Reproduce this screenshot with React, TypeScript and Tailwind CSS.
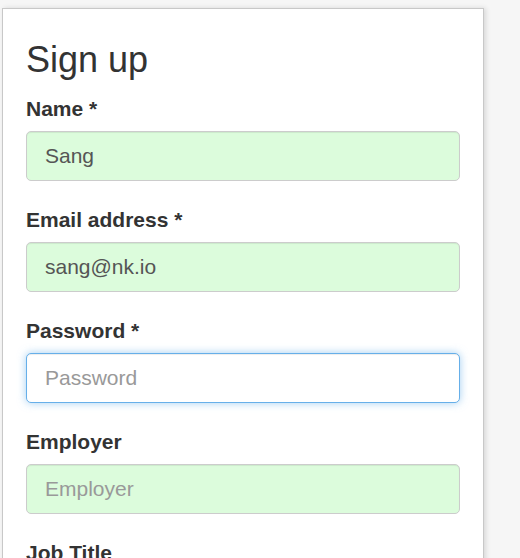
import React from 'react'

interface FieldProps {
  label: string
  required?: boolean
  type?: string
  value?: string
  placeholder: string
  filled?: boolean
  focused?: boolean
}

function Field({ label, required, type = 'text', value, placeholder, filled, focused }: FieldProps) {
  return (
    <div className="mb-[27px]">
      <label className="block h-6 mb-[10px] text-[21px] leading-6 font-bold text-[#333]">
        {label}
        {required ? ' *' : ''}
      </label>
      <input
        type={type}
        defaultValue={value}
        placeholder={placeholder}
        readOnly
        className={
          'block w-full h-[50px] rounded-[5px] border px-[18px] text-[21px] text-[#555] placeholder:text-[#999] outline-none ' +
          (focused
            ? 'bg-white border-[#66afe9] shadow-[inset_0_1px_1px_rgba(0,0,0,0.075),0_0_8px_rgba(102,175,233,0.6)]'
            : filled
              ? 'bg-[#dcfcdc] border-[#cccccc] shadow-[inset_0_1px_1px_rgba(0,0,0,0.075)]'
              : 'bg-white border-[#cccccc]')
        }
      />
    </div>
  )
}

export default function App() {
  return (
    <div
      className="h-[558px] overflow-hidden bg-[#f6f6f6] pt-[8px] pl-[2px]"
      style={{ fontFamily: '"Liberation Sans", Arial, sans-serif' }}
    >
      <div className="w-[482px] bg-white border border-[#c8c8c8] shadow-[2px_0_5px_rgba(0,0,0,0.12)] pt-[31px] px-[23px] pb-8">
        <h2 className="h-10 mb-[17px] text-[36px] leading-10 font-normal text-[#333]">Sign up</h2>
        <form>
          <Field label="Name" required value="Sang" placeholder="Name" filled />
          <Field label="Email address" required type="email" value="sang@nk.io" placeholder="Email address" filled />
          <Field label="Password" required type="password" placeholder="Password" focused />
          <Field label="Employer" placeholder="Employer" filled />
          <Field label="Job Title" placeholder="Job Title" filled />
        </form>
      </div>
    </div>
  )
}
